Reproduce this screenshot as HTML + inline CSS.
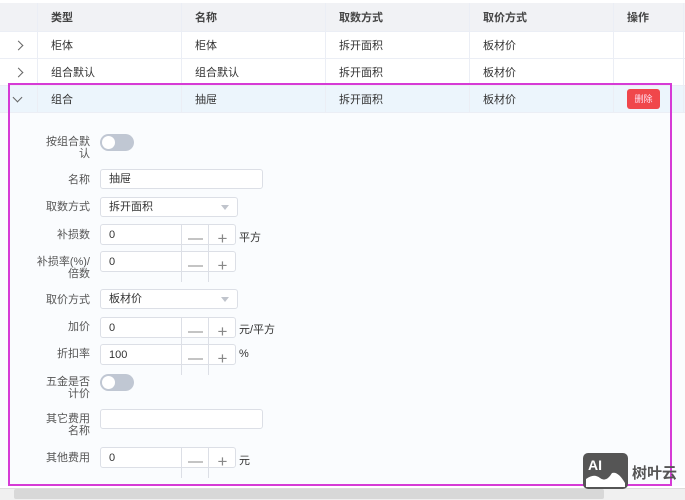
<!DOCTYPE html>
<html><head><meta charset="utf-8"><style>
*{box-sizing:border-box;margin:0;padding:0}
body{width:685px;height:500px;overflow:hidden;background:#fff;font-family:"Liberation Sans","Noto Sans CJK SC",sans-serif;font-size:11px;color:#333;position:relative}
.a{position:absolute}
.row{position:absolute;left:0;width:685px;border-bottom:1px solid #ebeef5}
.c{position:absolute;top:0;height:100%;display:flex;align-items:center;border-right:1px solid #ebeef5}
.lbl{position:absolute;right:595px;text-align:right;color:#555;font-size:11px;line-height:12px}
.in{position:absolute;left:100px;border:1px solid #dcdfe6;border-radius:3px;background:#fff;height:20px;padding-left:8px;line-height:18px;font-size:11px}
.num{position:absolute;left:100px;width:136px;height:21px;border:1px solid #dcdfe6;border-radius:3px;background:#fff;font-size:11px;line-height:21px;padding-left:8px}
.num .m{position:absolute;left:80px;top:0;width:28px;height:30px;border-left:1px solid #dcdfe6;text-align:center;font-size:15px;color:#888;line-height:28px}
.num .p{position:absolute;left:107px;top:0;width:28px;height:30px;border-left:1px solid #dcdfe6;text-align:center;font-size:17px;color:#888;line-height:28px}
.unit{position:absolute;left:239px;font-size:11px}
.tg{position:absolute;left:100px;width:34px;height:17px;border-radius:9px;background:#c0c7d3}
.tg:after{content:"";position:absolute;left:2px;top:2px;width:13px;height:13px;border-radius:50%;background:#fff}
.arr{position:absolute;right:8px;top:7px;border:4px solid transparent;border-top:5px solid #c0c4cc}
.ch{position:absolute;left:15px;width:7px;height:7px;border-right:1.3px solid #666;border-bottom:1.3px solid #666}
</style></head><body>
<div class="row" style="top:3px;height:29px;background:#f1f2f5;font-weight:bold;color:#444">
<div class="c" style="left:0;width:38px"></div>
<div class="c" style="left:38px;width:144px;padding-left:13px">类型</div>
<div class="c" style="left:182px;width:144px;padding-left:13px">名称</div>
<div class="c" style="left:326px;width:144px;padding-left:13px">取数方式</div>
<div class="c" style="left:470px;width:144px;padding-left:13px">取价方式</div>
<div class="c" style="left:614px;width:70px;padding-left:13px">操作</div>
</div>
<div class="row" style="top:32px;height:27px">
<div class="c" style="left:0;width:38px"><span class="ch" style="top:10px;transform:rotate(-45deg)"></span></div>
<div class="c" style="left:38px;width:144px;padding-left:13px">柜体</div>
<div class="c" style="left:182px;width:144px;padding-left:13px">柜体</div>
<div class="c" style="left:326px;width:144px;padding-left:13px">拆开面积</div>
<div class="c" style="left:470px;width:144px;padding-left:13px">板材价</div>
<div class="c" style="left:614px;width:70px"></div>
</div>
<div class="row" style="top:59px;height:27px">
<div class="c" style="left:0;width:38px"><span class="ch" style="top:10px;transform:rotate(-45deg)"></span></div>
<div class="c" style="left:38px;width:144px;padding-left:13px">组合默认</div>
<div class="c" style="left:182px;width:144px;padding-left:13px">组合默认</div>
<div class="c" style="left:326px;width:144px;padding-left:13px">拆开面积</div>
<div class="c" style="left:470px;width:144px;padding-left:13px">板材价</div>
<div class="c" style="left:614px;width:70px"></div>
</div>
<div class="a" style="left:0;top:86px;width:685px;height:400px;background:#fafcfe"></div>
<div class="row" style="top:86px;height:27px;background:#ecf5fc">
<div class="c" style="left:0;width:38px"><span class="ch" style="top:8px;left:14px;transform:rotate(45deg)"></span></div>
<div class="c" style="left:38px;width:144px;padding-left:13px">组合</div>
<div class="c" style="left:182px;width:144px;padding-left:13px">抽屉</div>
<div class="c" style="left:326px;width:144px;padding-left:13px">拆开面积</div>
<div class="c" style="left:470px;width:144px;padding-left:13px">板材价</div>
<div class="c" style="left:614px;width:70px"><div style="margin-left:13px;background:#f0474b;color:#fde;border-radius:3px;width:33px;height:20px;font-size:9px;line-height:20px;text-align:center">删除</div></div>
</div>
<div class="a" style="left:8px;top:83px;width:664px;height:403px;border:2px solid #d63bd6"></div>

<div class="lbl" style="top:136px">按组合默<br>认</div><div class="tg" style="top:134px"></div>
<div class="lbl" style="top:174px">名称</div><div class="in" style="top:169px;width:163px">抽屉</div>
<div class="lbl" style="top:201px">取数方式</div><div class="in" style="top:197px;width:138px">拆开面积<span class="arr"></span></div>
<div class="lbl" style="top:229px">补损数</div><div class="num" style="top:224px">0<span class="m">—</span><span class="p">+</span></div><span class="unit" style="top:229px">平方</span>
<div class="lbl" style="top:256px">补损率(%)/<br>倍数</div><div class="num" style="top:251px">0<span class="m">—</span><span class="p">+</span></div>
<div class="lbl" style="top:294px">取价方式</div><div class="in" style="top:289px;width:138px">板材价<span class="arr"></span></div>
<div class="lbl" style="top:321px">加价</div><div class="num" style="top:317px">0<span class="m">—</span><span class="p">+</span></div><span class="unit" style="top:321px">元/平方</span>
<div class="lbl" style="top:348px">折扣率</div><div class="num" style="top:344px">100<span class="m">—</span><span class="p">+</span></div><span class="unit" style="top:348px">%</span>
<div class="lbl" style="top:376px">五金是否<br>计价</div><div class="tg" style="top:374px"></div>
<div class="lbl" style="top:413px">其它费用<br>名称</div><div class="in" style="top:409px;width:163px"></div>
<div class="lbl" style="top:452px">其他费用</div><div class="num" style="top:447px">0<span class="m">—</span><span class="p">+</span></div><span class="unit" style="top:452px">元</span>

<div class="a" style="left:0;top:488px;width:685px;height:12px;background:#f0f0f0;border-top:1px solid #ddd"></div>
<div class="a" style="left:14px;top:489px;width:590px;height:10px;background:#d8d8d8;border-radius:2px"></div>
<div class="a" style="left:583px;top:453px;width:45px;height:36px;background:#555;border-radius:5px;color:#fff;font-weight:bold;font-size:14px;padding:4px 0 0 5px">AI<svg style="position:absolute;left:3px;top:16px" width="39" height="18"><path d="M0 10 Q8 4 14 9 T26 4 Q32 2 39 14 V18 H0Z" fill="#fff"/></svg></div>
<div class="a" style="left:632px;top:462px;font-size:15px;font-weight:bold;color:#555">树叶云</div>
</body></html>
